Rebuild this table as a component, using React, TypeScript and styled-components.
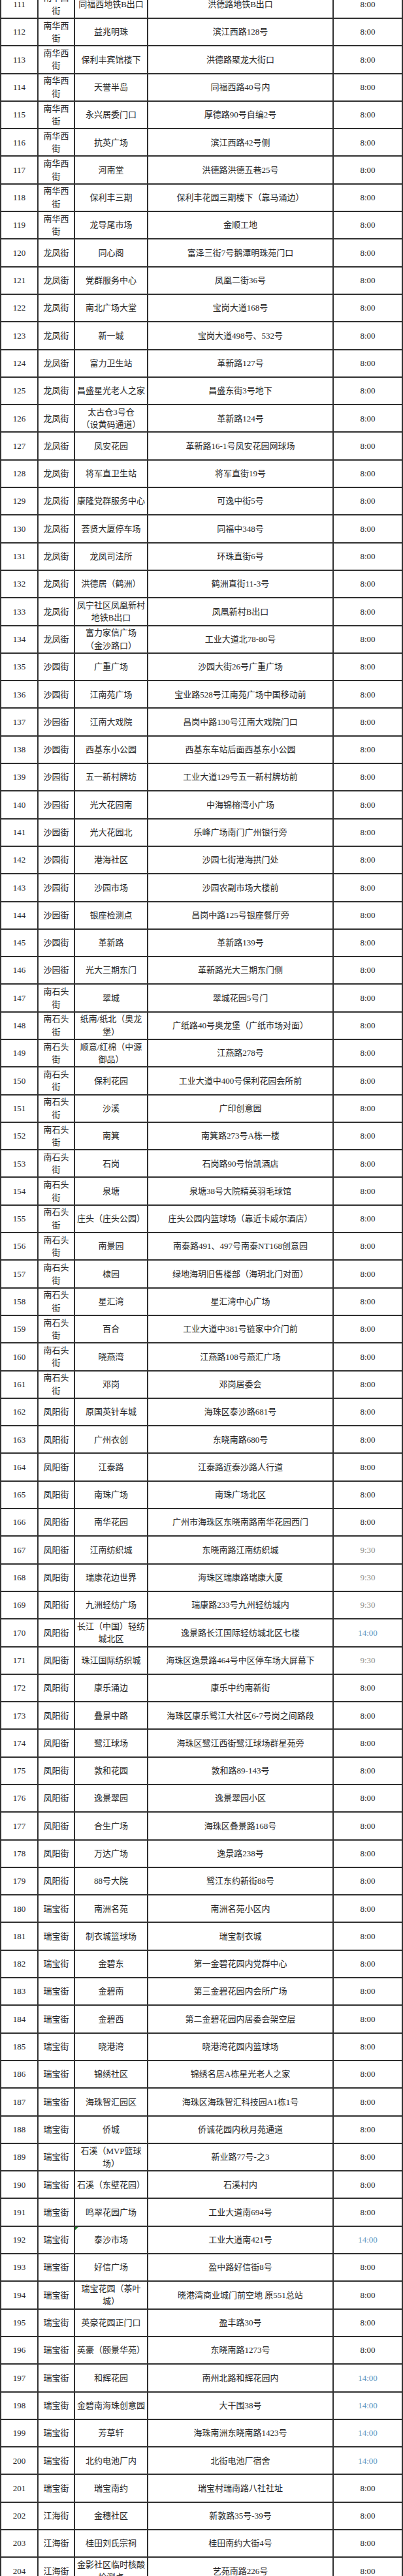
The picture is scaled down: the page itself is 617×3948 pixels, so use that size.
import React from "react";
import styled, { createGlobalStyle } from "styled-components";

type Row = [number, string, string, string, string];

const rows: Row[] = [
  [111, "南华西街", "同福西地铁B出口", "洪德路地铁B出口", "8:00"],
  [112, "南华西街", "益兆明珠", "滨江西路128号", "8:00"],
  [113, "南华西街", "保利丰宾馆楼下", "洪德路聚龙大街口", "8:00"],
  [114, "南华西街", "天誉半岛", "同福西路40号内", "8:00"],
  [115, "南华西街", "永兴居委门口", "厚德路90号自编2号", "8:00"],
  [116, "南华西街", "抗英广场", "滨江西路42号侧", "8:00"],
  [117, "南华西街", "河南堂", "洪德路洪德五巷25号", "8:00"],
  [118, "南华西街", "保利丰三期", "保利丰花园三期楼下（靠马涌边）", "8:00"],
  [119, "南华西街", "龙导尾市场", "金顺工地", "8:00"],
  [120, "龙凤街", "同心阁", "富泽三街7号鹅潭明珠苑门口", "8:00"],
  [121, "龙凤街", "党群服务中心", "凤凰二街36号", "8:00"],
  [122, "龙凤街", "南北广场大堂", "宝岗大道168号", "8:00"],
  [123, "龙凤街", "新一城", "宝岗大道498号、532号", "8:00"],
  [124, "龙凤街", "富力卫生站", "革新路127号", "8:00"],
  [125, "龙凤街", "昌盛星光老人之家", "昌盛东街3号地下", "8:00"],
  [126, "龙凤街", "太古仓3号仓\n（设黄码通道）", "革新路124号", "8:00"],
  [127, "龙凤街", "凤安花园", "革新路16-1号凤安花园网球场", "8:00"],
  [128, "龙凤街", "将军直卫生站", "将军直街19号", "8:00"],
  [129, "龙凤街", "康隆党群服务中心", "可逸中街5号", "8:00"],
  [130, "龙凤街", "荟贤大厦停车场", "同福中348号", "8:00"],
  [131, "龙凤街", "龙凤司法所", "环珠直街6号", "8:00"],
  [132, "龙凤街", "洪德居（鹤洲）", "鹤洲直街11-3号", "8:00"],
  [133, "龙凤街", "凤宁社区凤凰新村地铁B出口", "凤凰新村B出口", "8:00"],
  [134, "龙凤街", "富力家信广场\n（金沙路口）", "工业大道北78-80号", "8:00"],
  [135, "沙园街", "广重广场", "沙园大街26号广重广场", "8:00"],
  [136, "沙园街", "江南苑广场", "宝业路528号江南苑广场中国移动前", "8:00"],
  [137, "沙园街", "江南大戏院", "昌岗中路130号江南大戏院门口", "8:00"],
  [138, "沙园街", "西基东小公园", "西基东车站后面西基东小公园", "8:00"],
  [139, "沙园街", "五一新村牌坊", "工业大道129号五一新村牌坊前", "8:00"],
  [140, "沙园街", "光大花园南", "中海锦榕湾小广场", "8:00"],
  [141, "沙园街", "光大花园北", "乐峰广场南门广州银行旁", "8:00"],
  [142, "沙园街", "港海社区", "沙园七街港海拱门处", "8:00"],
  [143, "沙园街", "沙园市场", "沙园农副市场大楼前", "8:00"],
  [144, "沙园街", "银座检测点", "昌岗中路125号银座餐厅旁", "8:00"],
  [145, "沙园街", "革新路", "革新路139号", "8:00"],
  [146, "沙园街", "光大三期东门", "革新路光大三期东门侧", "8:00"],
  [147, "南石头街", "翠城", "翠城花园5号门", "8:00"],
  [148, "南石头街", "纸南/纸北（奥龙\n堡）", "广纸路40号奥龙堡（广纸市场对面）", "8:00"],
  [149, "南石头街", "顺意/红棉（中源\n御品）", "江燕路278号", "8:00"],
  [150, "南石头街", "保利花园", "工业大道中400号保利花园会所前", "8:00"],
  [151, "南石头街", "沙溪", "广印创意园", "8:00"],
  [152, "南石头街", "南箕", "南箕路273号A栋一楼", "8:00"],
  [153, "南石头街", "石岗", "石岗路90号怡凯酒店", "8:00"],
  [154, "南石头街", "泉塘", "泉塘38号大院精英羽毛球馆", "8:00"],
  [155, "南石头街", "庄头（庄头公园）", "庄头公园内篮球场（靠近卡威尔酒店）", "8:00"],
  [156, "南石头街", "南景园", "南泰路491、497号南泰NT168创意园", "8:00"],
  [157, "南石头街", "棣园", "绿地海玥旧售楼部（海玥北门对面）", "8:00"],
  [158, "南石头街", "星汇湾", "星汇湾中心广场", "8:00"],
  [159, "南石头街", "百合", "工业大道中381号链家中介门前", "8:00"],
  [160, "南石头街", "晓燕湾", "江燕路108号燕汇广场", "8:00"],
  [161, "南石头街", "邓岗", "邓岗居委会", "8:00"],
  [162, "凤阳街", "原国英针车城", "海珠区泰沙路681号", "8:00"],
  [163, "凤阳街", "广州衣创", "东晓南路680号", "8:00"],
  [164, "凤阳街", "江泰路", "江泰路近泰沙路人行道", "8:00"],
  [165, "凤阳街", "南珠广场", "南珠广场北区", "8:00"],
  [166, "凤阳街", "南华花园", "广州市海珠区东晓南路南华花园西门", "8:00"],
  [167, "凤阳街", "江南纺织城", "东晓南路江南纺织城", "9:30"],
  [168, "凤阳街", "瑞康花边世界", "海珠区瑞康路瑞康大厦", "9:30"],
  [169, "凤阳街", "九洲轻纺广场", "瑞康路233号九州轻纺城内", "9:30"],
  [170, "凤阳街", "长江（中国）轻纺城北区", "逸景路长江国际轻纺城北区七楼", "14:00"],
  [171, "凤阳街", "珠江国际纺织城", "海珠区逸景路464号中区停车场大屏幕下", "9:30"],
  [172, "凤阳街", "康乐涌边", "康乐中约南新街", "8:00"],
  [173, "凤阳街", "叠景中路", "海珠区康乐鹭江大社区6-7号岗之间路段", "8:00"],
  [174, "凤阳街", "鹭江球场", "海珠区鹭江西街鹭江球场群星苑旁", "8:00"],
  [175, "凤阳街", "敦和花园", "敦和路89-143号", "8:00"],
  [176, "凤阳街", "逸景翠园", "逸景翠园小区", "8:00"],
  [177, "凤阳街", "合生广场", "海珠区叠景路168号", "8:00"],
  [178, "凤阳街", "万达广场", "逸景路238号", "8:00"],
  [179, "凤阳街", "88号大院", "鹭江东约新街88号", "8:00"],
  [180, "瑞宝街", "南洲名苑", "南洲名苑小区内", "8:00"],
  [181, "瑞宝街", "制衣城篮球场", "瑞宝制衣城", "8:00"],
  [182, "瑞宝街", "金碧东", "第一金碧花园内党群中心", "8:00"],
  [183, "瑞宝街", "金碧南", "第三金碧花园内会所广场", "8:00"],
  [184, "瑞宝街", "金碧西", "第二金碧花园内居委会架空层", "8:00"],
  [185, "瑞宝街", "晓港湾", "晓港湾花园内篮球场", "8:00"],
  [186, "瑞宝街", "锦绣社区", "锦绣名居A栋星光老人之家", "8:00"],
  [187, "瑞宝街", "海珠智汇园区", "海珠区海珠智汇科技园A1栋1号", "8:00"],
  [188, "瑞宝街", "侨城", "侨诚花园内秋月苑通道", "8:00"],
  [189, "瑞宝街", "石溪（MVP篮球\n场）", "新业路77号-之3", "8:00"],
  [190, "瑞宝街", "石溪（东壁花园）", "石溪村内", "8:00"],
  [191, "瑞宝街", "鸣翠花园广场", "工业大道南694号", "8:00"],
  [192, "瑞宝街", "泰沙市场", "工业大道南421号", "14:00"],
  [193, "瑞宝街", "好信广场", "盈中路好信街8号", "8:00"],
  [194, "瑞宝街", "瑞宝花园（茶叶城）", "晓港湾商业城门前空地 原551总站", "8:00"],
  [195, "瑞宝街", "英豪花园正门口", "盈丰路30号", "8:00"],
  [196, "瑞宝街", "英豪（颐景华苑）", "东晓南路1273号", "8:00"],
  [197, "瑞宝街", "和辉花园", "南州北路和辉花园内", "14:00"],
  [198, "瑞宝街", "金碧南海珠创意园", "大干围38号", "14:00"],
  [199, "瑞宝街", "芳草轩", "海珠南洲东晓南路1423号", "14:00"],
  [200, "瑞宝街", "北约电池厂内", "北街电池厂宿舍", "14:00"],
  [201, "瑞宝街", "瑞宝南约", "瑞宝村瑞南路八社社址", "8:00"],
  [202, "江海街", "金穗社区", "新敦路35号-39号", "8:00"],
  [203, "江海街", "桂田刘氏宗祠", "桂田南约大街4号", "8:00"],
  [204, "江海街", "金影社区临时核酸检测点", "艺苑南路226号", "8:00"],
];

const GlobalStyle = createGlobalStyle`
  html, body {
    margin: 0;
    padding: 0;
    background: #fff;
  }
  body {
    font-family: "Liberation Serif", "Noto Sans CJK SC", serif;
    color: #262626;
    overflow-x: hidden;
  }
`;

const Sheet = styled.div`
  width: 617px;
  margin-top: -13.3px;
  border-left: 2px solid #303030;
  box-sizing: border-box;
`;

const Line = styled.div`
  display: grid;
  grid-template-columns: 57px 56px 112px 284px 1fr;
  height: 42.31px;
  border-bottom: 2px solid #303030;
  box-sizing: border-box;
`;

const Cell = styled.div<{ $pad?: number; $flag?: boolean }>`
  position: relative;
  display: flex;
  align-items: center;
  justify-content: center;
  text-align: center;
  padding: 0 ${(p) => p.$pad ?? 4}px;
  border-right: 2px solid #303030;
  box-sizing: border-box;
  font-size: 13px;
  line-height: 19.5px;
  white-space: pre-line;
  overflow: hidden;

  &::before {
    content: "";
    display: ${(p) => (p.$flag ? "block" : "none")};
    position: absolute;
    left: 0;
    top: 0;
    width: 0;
    height: 0;
    border-top: 5px solid #1e7a2a;
    border-right: 5px solid transparent;
  }
`;

const Time = styled(Cell)<{ $tone: string }>`
  color: ${(p) =>
    p.$tone === "14:00" ? "#5c95c0" : p.$tone === "9:30" ? "#8e8e8a" : "#262626"};
`;

export default function App() {
  return (
    <>
      <GlobalStyle />
      <Sheet>
        {rows.map(([no, street, site, addr, time]) => (
          <Line key={no}>
            <Cell>{no}</Cell>
            <Cell $pad={4}>{street}</Cell>
            <Cell $pad={3} $flag={no === 192}>
              {site}
            </Cell>
            <Cell>{addr}</Cell>
            <Time $tone={time}>{time}</Time>
          </Line>
        ))}
      </Sheet>
    </>
  );
}
